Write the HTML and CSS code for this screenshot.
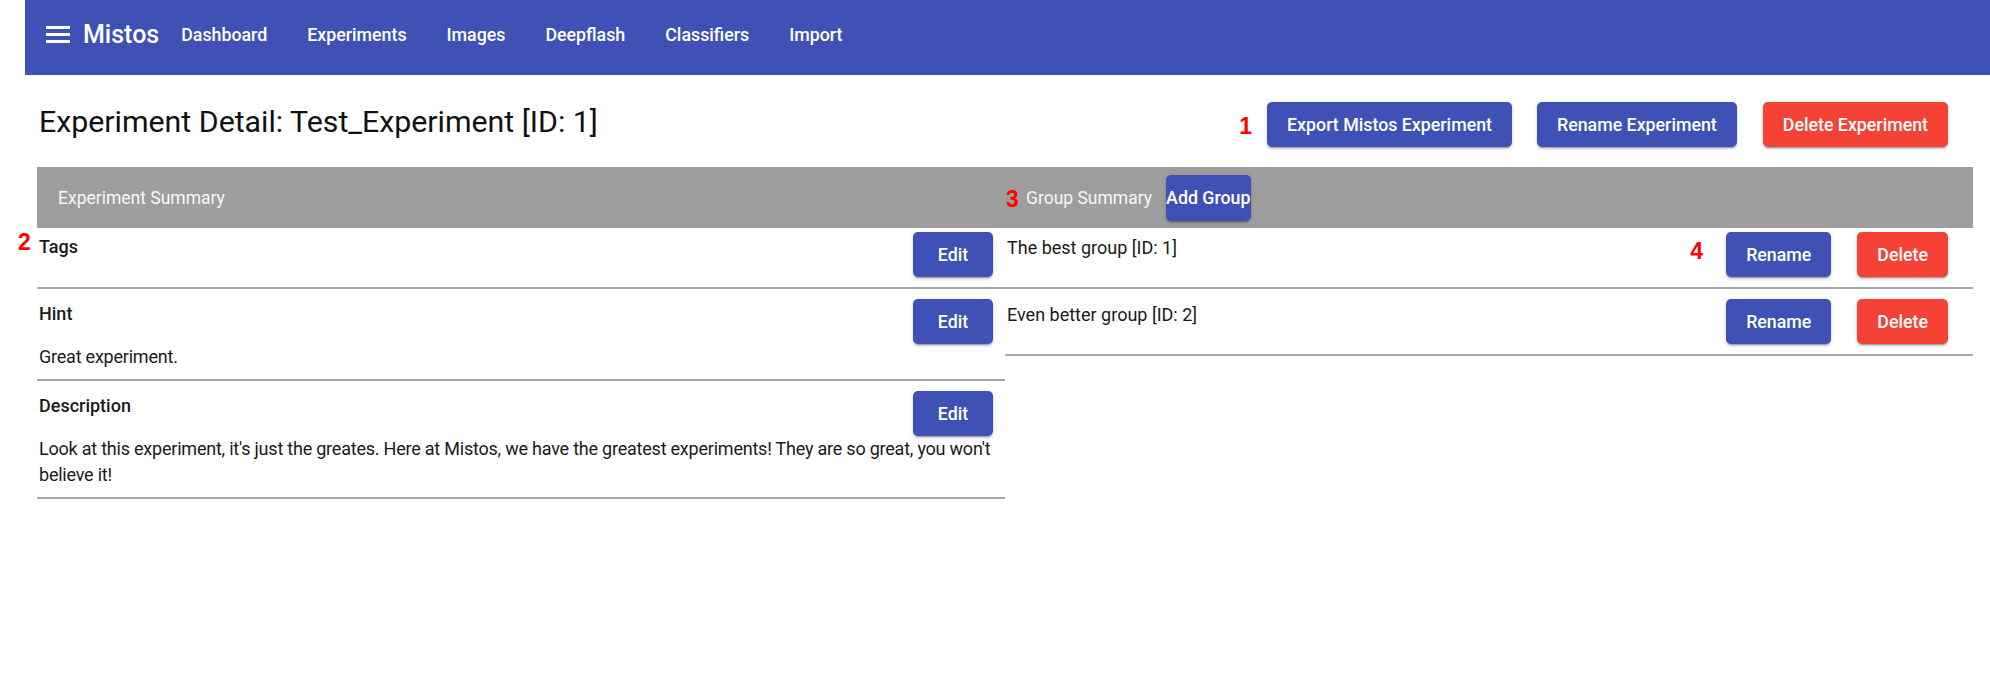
FILE: index.html
```html
<!DOCTYPE html>
<html lang="en">
<head>
<meta charset="utf-8">
<title>Mistos - Experiment Detail</title>
<link rel="stylesheet" href="styles.css">
</head>
<body>
<nav class="topbar">
  <svg class="menu-icon" viewBox="0 0 24 17" aria-hidden="true">
    <rect x="0" y="0" width="24" height="3" fill="#fff"/>
    <rect x="0" y="7" width="24" height="3" fill="#fff"/>
    <rect x="0" y="14" width="24" height="3" fill="#fff"/>
  </svg>
  <span class="brand">Mistos</span>
  <a class="nav-link" href="#">Dashboard</a>
  <a class="nav-link" href="#">Experiments</a>
  <a class="nav-link" href="#">Images</a>
  <a class="nav-link" href="#">Deepflash</a>
  <a class="nav-link" href="#">Classifiers</a>
  <a class="nav-link" href="#">Import</a>
</nav>

<main class="page">
  <div class="title-row">
    <h1 class="page-title">Experiment Detail: Test_Experiment [ID: 1]</h1>
    <div class="actions">
      <span class="marker marker-inline">1</span>
      <button class="btn btn-primary">Export Mistos Experiment</button>
      <button class="btn btn-primary">Rename Experiment</button>
      <button class="btn btn-danger">Delete Experiment</button>
    </div>
  </div>

  <div class="summary">
    <section class="panel panel-left">
      <div class="panel-head">Experiment Summary</div>
      <span class="marker marker-2">2</span>
      <div class="item item-first">
        <div class="item-line">
          <span class="item-title">Tags</span>
          <button class="btn btn-primary">Edit</button>
        </div>
      </div>
      <div class="item item-text">
        <div class="item-line">
          <span class="item-title">Hint</span>
          <button class="btn btn-primary">Edit</button>
        </div>
        <p class="item-body">Great experiment.</p>
      </div>
      <div class="item item-text">
        <div class="item-line">
          <span class="item-title">Description</span>
          <button class="btn btn-primary">Edit</button>
        </div>
        <p class="item-body">Look at this experiment, it's just the greates. Here at Mistos, we have the greatest experiments! They are so great, you won't believe it!</p>
      </div>
    </section>

    <section class="panel panel-right">
      <div class="panel-head">
        <span class="marker marker-3">3</span>
        <span>Group Summary</span>
        <button class="btn btn-primary btn-tight">Add Group</button>
      </div>
      <div class="item item-first">
        <div class="item-line group-line">
          <span class="group-name">The best group [ID: 1]</span>
          <div class="group-actions">
            <span class="marker marker-4">4</span>
            <button class="btn btn-primary">Rename</button>
            <button class="btn btn-danger">Delete</button>
          </div>
        </div>
      </div>
      <div class="item">
        <div class="item-line group-line">
          <span class="group-name">Even better group [ID: 2]</span>
          <div class="group-actions">
            <button class="btn btn-primary">Rename</button>
            <button class="btn btn-danger">Delete</button>
          </div>
        </div>
      </div>
    </section>
  </div>
</main>
</body>
</html>
```

FILE: styles.css
```css
body {
  margin: 0;
  font-family: Roboto, "Liberation Sans", sans-serif;
  color: #1a1a1a;
  background: #fff;
}

.topbar {
  margin-left: 25px;
  height: 75px;
  box-sizing: border-box;
  padding: 0 0 7px 21px;
  background: #3f51b5;
  display: flex;
  align-items: center;
  color: #fff;
}

.menu-icon {
  width: 24px;
  height: 17px;
  margin-right: 13px;
  flex: none;
}

.brand {
  font-size: 25px;
  font-weight: 500;
  line-height: 1;
  margin-right: 2px;
}

.nav-link {
  font-size: 17.8px;
  font-weight: 500;
  padding: 0 20px;
  color: #fff;
  text-decoration: none;
}

.page {
  margin: 27px 0 0 37px;
  width: 1936px;
}

.title-row {
  display: flex;
  justify-content: space-between;
  align-items: flex-start;
  height: 45px;
}

.page-title {
  margin: 2px 0 0 2px;
  font-size: 30.3px;
  font-weight: 400;
  line-height: 36px;
  color: #111;
}

.actions {
  display: flex;
  align-items: center;
  padding-right: 25px;
}

.actions .btn + .btn {
  margin-left: 25px;
}

.actions .btn:last-child {
  margin-left: 26px;
}

.btn {
  height: 45px;
  min-width: 80px;
  padding: 0 20px;
  border: 0;
  border-radius: 5px;
  font-family: Roboto, "Liberation Sans", sans-serif;
  font-size: 17.8px;
  font-weight: 500;
  color: #fff;
  cursor: pointer;
  box-shadow: 0 3px 1px -2px rgba(0,0,0,.2), 0 2px 2px 0 rgba(0,0,0,.14), 0 1px 5px 0 rgba(0,0,0,.12);
  flex: none;
}

.btn-primary { background: #3f51b5; }
.btn-danger { background: #f44336; }

.btn-tight {
  padding: 0;
  min-width: 0;
  height: 46px;
  margin-left: 14px;
}

.marker {
  font-family: "Liberation Sans", Arial, sans-serif;
  font-weight: 700;
  font-size: 23px;
  line-height: 23px;
  color: #ff0000;
}

.marker-inline {
  margin-right: 15px;
  margin-top: 4px;
}

.summary {
  margin-top: 20px;
  display: grid;
  grid-template-columns: 968px 968px;
}

.panel {
  position: relative;
}

.panel-head {
  position: relative;
  height: 61px;
  box-sizing: border-box;
  padding-left: 21px;
  background: #9e9e9e;
  display: flex;
  align-items: center;
  color: #f7f7f7;
  font-size: 17.5px;
}

.marker-2 {
  position: absolute;
  left: -19px;
  top: 64px;
}

.marker-3 {
  position: absolute;
  left: 1px;
  top: 21px;
}

.marker-4 {
  align-self: flex-start;
  margin: 8px 23px 0 0;
}

.item {
  padding: 10px 0 10px 2px;
  border-bottom: 2px solid #a8a8a8;
}

.item-first {
  padding-top: 4px;
}

.item-text {
  padding-bottom: 9px;
}

.item-line {
  display: flex;
  justify-content: space-between;
  align-items: flex-start;
  padding-right: 12px;
}

.item-title {
  font-size: 18px;
  font-weight: 500;
  line-height: 26px;
  margin-top: 2px;
}

.item-body {
  margin: 0 -14px 0 0;
  font-size: 18px;
  line-height: 26px;
  letter-spacing: -0.22px;
}

.group-line {
  padding-right: 25px;
}

.group-name {
  font-size: 18px;
  line-height: 26px;
  margin-top: 3px;
}

.group-actions {
  display: flex;
  align-items: flex-start;
}

.group-actions .btn + .btn {
  margin-left: 26px;
}
```
